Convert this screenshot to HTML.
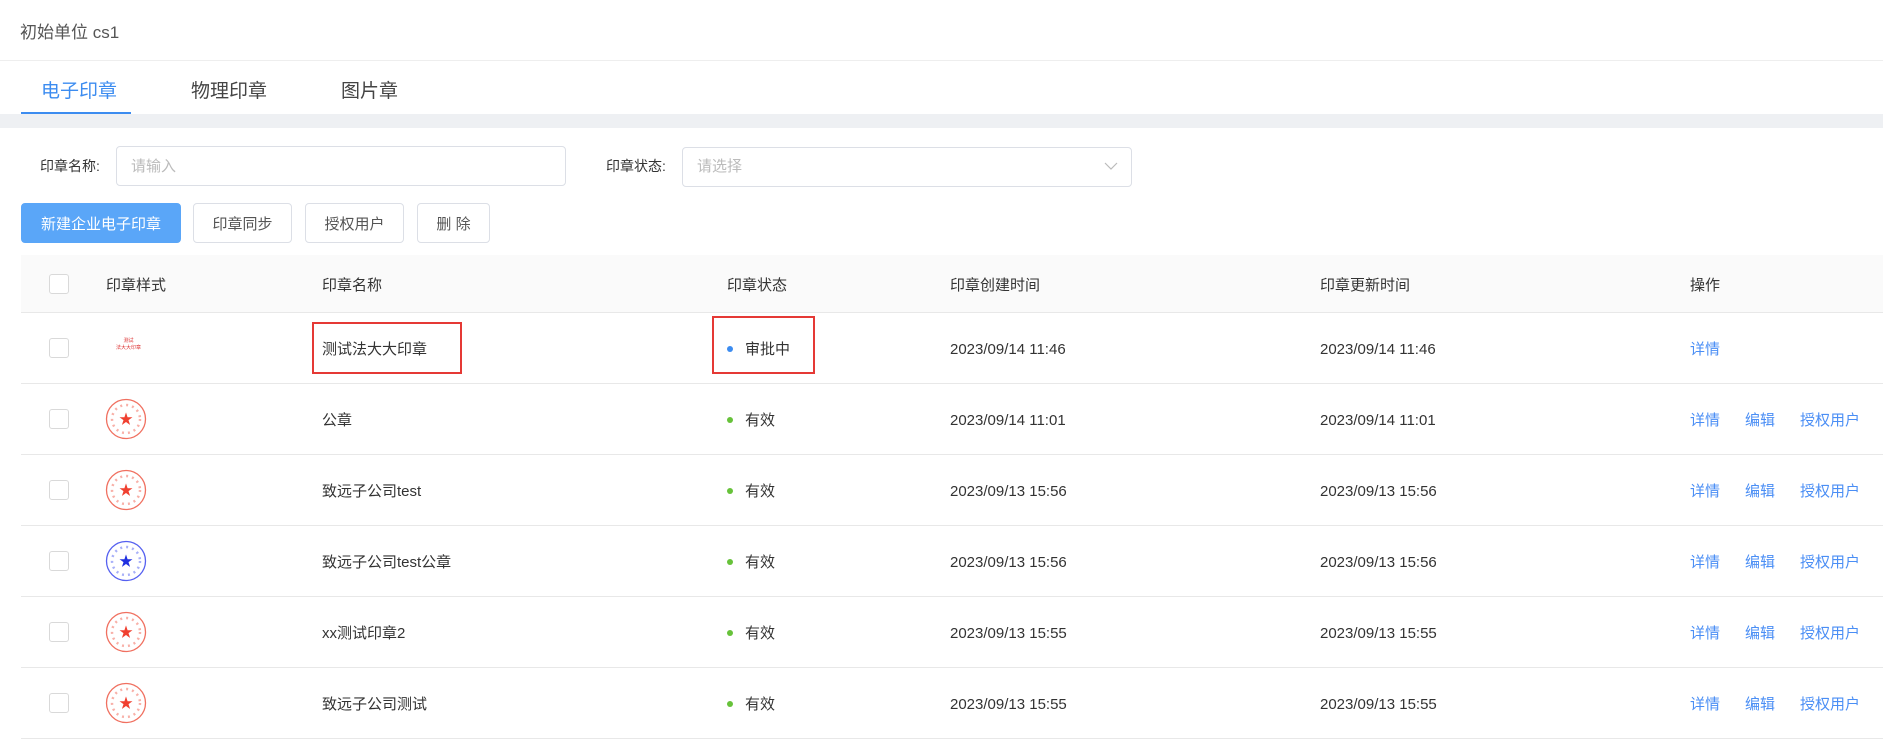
<!DOCTYPE html>
<html><head><meta charset="utf-8"><style>
*{margin:0;padding:0;box-sizing:border-box}
body{width:1883px;height:747px;overflow:hidden;background:#fff;font-family:"Liberation Sans","Noto Sans CJK SC",sans-serif;font-size:15px;color:#333;position:relative}
.a{position:absolute;white-space:nowrap;line-height:26px}
.f{line-height:20px}
.btn{position:absolute;top:203px;height:40px;border:1px solid #dcdfe6;border-radius:4px;background:#fff;color:#555;display:flex;align-items:center;justify-content:center;font-size:15px;line-height:20px;padding-top:4px}
.cb{position:absolute;left:49px;width:20px;height:20px;border:1px solid #d9d9d9;border-radius:3px;background:#fff}
.line{position:absolute;left:21px;right:0;height:1px;background:#e8e8e8}
.lk{color:#4a8ef5}
.dot{display:inline-block;width:6px;height:6px;border-radius:50%;background:#67c23a;margin-right:12px;vertical-align:middle;position:relative;top:-1px}
</style></head><body>
<div class="a" style="left:20px;top:20px;font-size:17px;color:#555">初始单位 cs1</div>
<div class="a" style="left:0;top:60px;width:1883px;height:1px;background:#eee"></div>
<div class="a" style="left:41px;top:79px;font-size:19px;color:#3c8cf0">电子印章</div>
<div class="a" style="left:191px;top:79px;font-size:19px;color:#444">物理印章</div>
<div class="a" style="left:341px;top:79px;font-size:19px;color:#444">图片章</div>
<div class="a" style="left:21px;top:112px;width:110px;height:3px;background:#3c8cf0"></div>
<div class="a" style="left:0;top:114px;width:1883px;height:14px;background:#eef0f3"></div>

<div class="a f" style="left:40px;top:156px;font-size:14px;color:#333">印章名称:</div>
<div class="a" style="left:116px;top:146px;width:450px;height:40px;border:1px solid #dcdfe6;border-radius:4px"></div>
<div class="a f" style="left:131px;top:157px;font-size:15px;color:#bbb">请输入</div>
<div class="a f" style="left:606px;top:156px;font-size:14px;color:#333">印章状态:</div>
<div class="a" style="left:682px;top:147px;width:450px;height:40px;border:1px solid #dcdfe6;border-radius:4px"></div>
<div class="a f" style="left:697px;top:157px;font-size:15px;color:#bbb">请选择</div>
<svg class="a" style="left:1104px;top:161px" width="14" height="10"><path d="M1 2 L7 8 L13 2" fill="none" stroke="#bbb" stroke-width="1.2"/></svg>

<div class="btn" style="left:21px;width:160px;background:#5aa6f8;border-color:#5aa6f8;color:#fff">新建企业电子印章</div>
<div class="btn" style="left:193px;width:99px">印章同步</div>
<div class="btn" style="left:305px;width:99px">授权用户</div>
<div class="btn" style="left:417px;width:73px">删 除</div>

<div class="a" style="left:21px;top:255px;width:1862px;height:57px;background:#fafafa"></div>
<div class="line" style="top:312px"></div>
<div class="cb" style="top:274px"></div>
<div class="a" style="left:106px;top:273px">印章样式</div>
<div class="a" style="left:322px;top:273px">印章名称</div>
<div class="a" style="left:727px;top:273px">印章状态</div>
<div class="a" style="left:950px;top:273px">印章创建时间</div>
<div class="a" style="left:1320px;top:273px">印章更新时间</div>
<div class="a" style="left:1690px;top:273px">操作</div>

<!-- row 1 -->
<div class="cb" style="top:338px"></div>
<div class="a" style="left:116px;top:338px;font-size:5px;color:#d33;text-align:center;line-height:7px">测试<br>法大大印章</div>
<div class="a" style="left:322px;top:337px">测试法大大印章</div>
<div class="a" style="left:312px;top:322px;width:150px;height:52px;border:2px solid #e53935"></div>
<div class="a" style="left:727px;top:337px"><span class="dot" style="background:#3c8cf0"></span>审批中</div>
<div class="a" style="left:712px;top:316px;width:103px;height:58px;border:2px solid #e53935"></div>
<div class="a" style="left:950px;top:337px">2023/09/14 11:46</div>
<div class="a" style="left:1320px;top:337px">2023/09/14 11:46</div>
<div class="a lk" style="left:1690px;top:337px">详情</div>
<div class="line" style="top:383px"></div>

<!-- rows 2-6 -->
<div class="cb" style="top:409px"></div>
<svg class="a" style="left:105px;top:398px" width="42" height="42"><circle cx="21" cy="21" r="19.5" fill="none" stroke="#f07060" stroke-width="1.3"/><text x="21" y="26" text-anchor="middle" font-size="14" fill="#f04030">★</text><circle cx="21" cy="21" r="14" fill="none" stroke="#f8b0a8" stroke-width="2.5" stroke-dasharray="2 4"/></svg>
<div class="a" style="left:322px;top:408px">公章</div>
<div class="a" style="left:727px;top:408px"><span class="dot"></span>有效</div>
<div class="a" style="left:950px;top:408px">2023/09/14 11:01</div>
<div class="a" style="left:1320px;top:408px">2023/09/14 11:01</div>
<div class="a lk" style="left:1690px;top:408px">详情</div><div class="a lk" style="left:1745px;top:408px">编辑</div><div class="a lk" style="left:1800px;top:408px">授权用户</div>
<div class="line" style="top:454px"></div>

<div class="cb" style="top:480px"></div>
<svg class="a" style="left:105px;top:469px" width="42" height="42"><circle cx="21" cy="21" r="19.5" fill="none" stroke="#f07060" stroke-width="1.3"/><text x="21" y="26" text-anchor="middle" font-size="14" fill="#f04030">★</text><circle cx="21" cy="21" r="14" fill="none" stroke="#f8b0a8" stroke-width="2.5" stroke-dasharray="2 4"/></svg>
<div class="a" style="left:322px;top:479px">致远子公司test</div>
<div class="a" style="left:727px;top:479px"><span class="dot"></span>有效</div>
<div class="a" style="left:950px;top:479px">2023/09/13 15:56</div>
<div class="a" style="left:1320px;top:479px">2023/09/13 15:56</div>
<div class="a lk" style="left:1690px;top:479px">详情</div><div class="a lk" style="left:1745px;top:479px">编辑</div><div class="a lk" style="left:1800px;top:479px">授权用户</div>
<div class="line" style="top:525px"></div>

<div class="cb" style="top:551px"></div>
<svg class="a" style="left:105px;top:540px" width="42" height="42"><circle cx="21" cy="21" r="19.5" fill="none" stroke="#5560f0" stroke-width="1.3"/><text x="21" y="26" text-anchor="middle" font-size="14" fill="#2030e0">★</text><circle cx="21" cy="21" r="14" fill="none" stroke="#a8b0f8" stroke-width="2.5" stroke-dasharray="2 4"/></svg>
<div class="a" style="left:322px;top:550px">致远子公司test公章</div>
<div class="a" style="left:727px;top:550px"><span class="dot"></span>有效</div>
<div class="a" style="left:950px;top:550px">2023/09/13 15:56</div>
<div class="a" style="left:1320px;top:550px">2023/09/13 15:56</div>
<div class="a lk" style="left:1690px;top:550px">详情</div><div class="a lk" style="left:1745px;top:550px">编辑</div><div class="a lk" style="left:1800px;top:550px">授权用户</div>
<div class="line" style="top:596px"></div>

<div class="cb" style="top:622px"></div>
<svg class="a" style="left:105px;top:611px" width="42" height="42"><circle cx="21" cy="21" r="19.5" fill="none" stroke="#f07060" stroke-width="1.3"/><text x="21" y="26" text-anchor="middle" font-size="14" fill="#f04030">★</text><circle cx="21" cy="21" r="14" fill="none" stroke="#f8b0a8" stroke-width="2.5" stroke-dasharray="2 4"/></svg>
<div class="a" style="left:322px;top:621px">xx测试印章2</div>
<div class="a" style="left:727px;top:621px"><span class="dot"></span>有效</div>
<div class="a" style="left:950px;top:621px">2023/09/13 15:55</div>
<div class="a" style="left:1320px;top:621px">2023/09/13 15:55</div>
<div class="a lk" style="left:1690px;top:621px">详情</div><div class="a lk" style="left:1745px;top:621px">编辑</div><div class="a lk" style="left:1800px;top:621px">授权用户</div>
<div class="line" style="top:667px"></div>

<div class="cb" style="top:693px"></div>
<svg class="a" style="left:105px;top:682px" width="42" height="42"><circle cx="21" cy="21" r="19.5" fill="none" stroke="#f07060" stroke-width="1.3"/><text x="21" y="26" text-anchor="middle" font-size="14" fill="#f04030">★</text><circle cx="21" cy="21" r="14" fill="none" stroke="#f8b0a8" stroke-width="2.5" stroke-dasharray="2 4"/></svg>
<div class="a" style="left:322px;top:692px">致远子公司测试</div>
<div class="a" style="left:727px;top:692px"><span class="dot"></span>有效</div>
<div class="a" style="left:950px;top:692px">2023/09/13 15:55</div>
<div class="a" style="left:1320px;top:692px">2023/09/13 15:55</div>
<div class="a lk" style="left:1690px;top:692px">详情</div><div class="a lk" style="left:1745px;top:692px">编辑</div><div class="a lk" style="left:1800px;top:692px">授权用户</div>
<div class="line" style="top:738px"></div>
</body></html>
